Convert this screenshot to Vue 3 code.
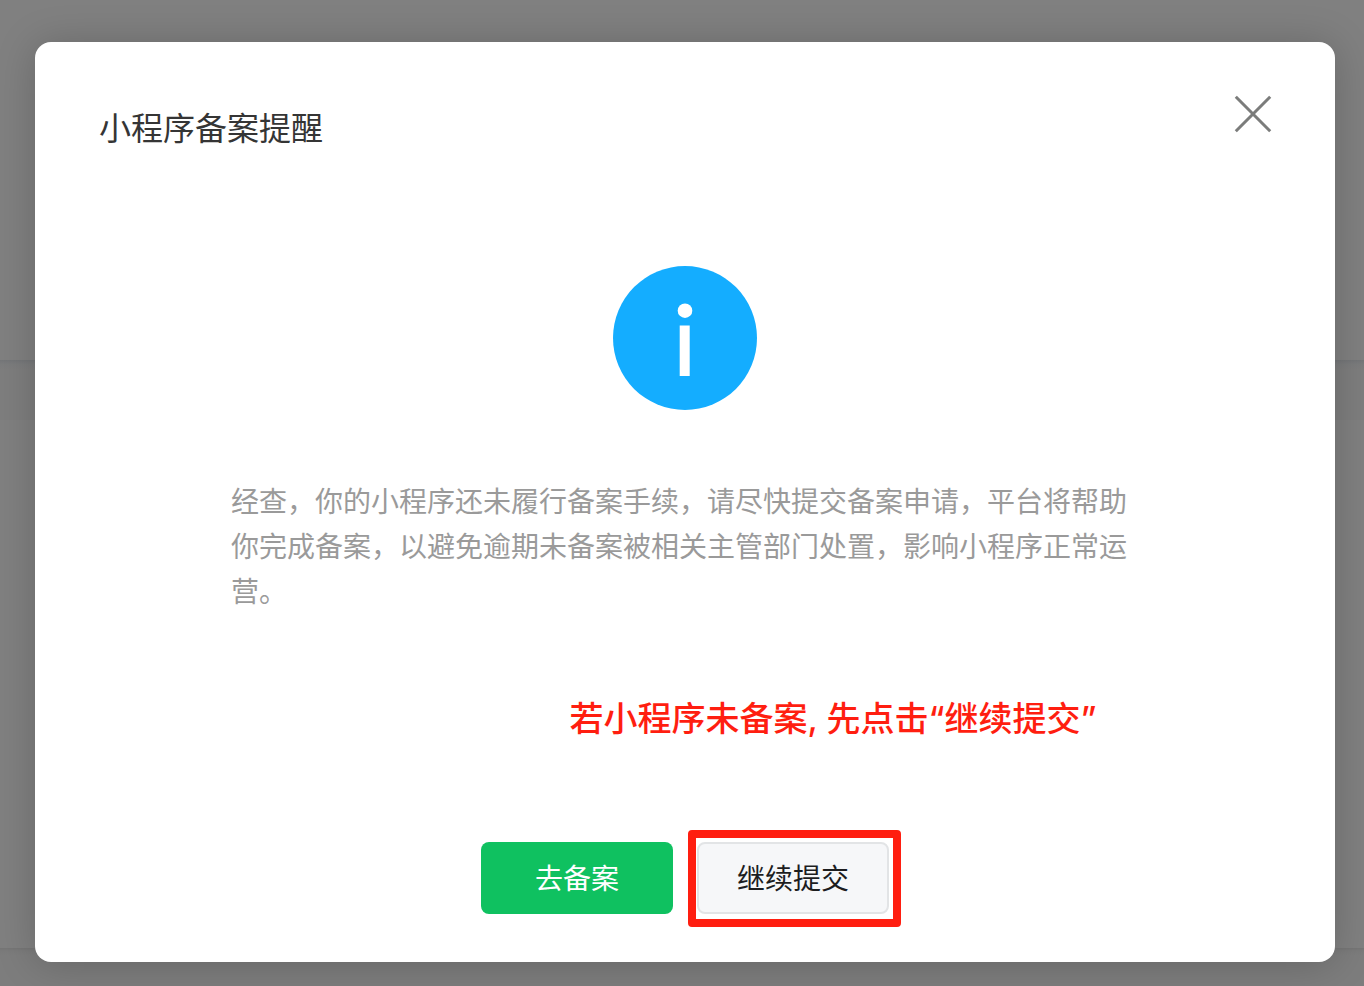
<script setup>
import { ref } from 'vue'

const open = ref(true)
const close = () => {
  open.value = false
}
</script>

<template>
  <div class="stage">
    <div class="backdrop" aria-hidden="true">
      <div class="band band-top"></div>
      <div class="band band-tabs"></div>
      <div class="band band-main"></div>
      <div class="band band-foot"></div>
    </div>

    <section v-if="open" class="dialog" role="dialog" aria-modal="true" aria-labelledby="dialog-title">
      <header class="head">
        <h1 id="dialog-title" class="title">小程序备案提醒</h1>
        <button class="close" type="button" aria-label="关闭" @click="close">
          <svg width="36" height="36" viewBox="0 0 36 36" fill="none" stroke="#7b7c7b" stroke-width="3">
            <path d="M0.8 0.8 35.2 35.2M35.2 0.8 0.8 35.2" />
          </svg>
        </button>
      </header>

      <svg class="info" width="144" height="144" viewBox="0 0 144 144" aria-hidden="true">
        <circle cx="72" cy="72" r="72" fill="#14adff" />
        <circle cx="72" cy="44.7" r="7.3" fill="#fff" />
        <rect x="66.7" y="59.5" width="10" height="50.5" fill="#fff" />
      </svg>

      <p class="message">经查，你的小程序还未履行备案手续，请尽快提交备案申请，平台将帮助你完成备案，以避免逾期未备案被相关主管部门处置，影响小程序正常运营。</p>

      <p class="note">若小程序未备案, 先点击“继续提交”</p>

      <footer class="actions">
        <button class="btn primary" type="button">去备案</button>
        <div class="marked">
          <button class="btn plain" type="button" @click="close">继续提交</button>
        </div>
      </footer>
    </section>
  </div>
</template>

<style>
body {
  margin: 0;
  background: #808080;
}
</style>

<style scoped>
.stage {
  position: relative;
  box-sizing: border-box;
  min-height: 100vh;
  padding: 42px 29px 24px 35px;
  font-family: "Liberation Sans", "Noto Sans CJK SC", sans-serif;
}

.backdrop {
  position: absolute;
  inset: 0;
  display: flex;
  flex-direction: column;
  background: #808080;
}

.band-top {
  height: 360px;
}

.band-tabs {
  height: 60px;
  background: linear-gradient(#747678, #7b7c7d 4px, #7e7e7e 10px);
}

.band-main {
  flex: 1;
}

.band-foot {
  height: 38px;
  background: linear-gradient(#757575, #7b7b7b 3px, #7d7d7d 8px);
}

.dialog {
  position: relative;
  display: flex;
  flex-direction: column;
  align-items: center;
  box-sizing: border-box;
  padding: 54px 64px 48px;
  border-radius: 16px;
  background: #fff;
  box-shadow: 0 2px 40px rgba(0, 0, 0, 0.2);
}

.head {
  display: flex;
  justify-content: space-between;
  align-items: flex-start;
  align-self: stretch;
}

.title {
  margin: 0;
  padding-top: 9px;
  color: #353535;
  font-size: 32px;
  line-height: 48px;
  font-weight: 400;
}

.close {
  display: flex;
  padding: 0;
  border: 0;
  background: none;
  cursor: pointer;
}

.close svg {
  overflow: visible;
}

.info {
  display: block;
  margin-top: 113px;
}

.message {
  box-sizing: border-box;
  width: 100%;
  margin: 70px 0 0;
  padding: 0 132px;
  color: #9a9a9a;
  font-size: 28px;
  line-height: 45px;
}

.note {
  margin: 80px 0 0;
  padding-left: 296px;
  color: #ff1e10;
  font-family: Inter, "Noto Sans CJK SC", sans-serif;
  font-size: 34px;
  line-height: 48px;
  font-weight: 500;
}

.actions {
  display: flex;
  gap: 24px;
  margin-top: 99px;
}

.btn {
  box-sizing: border-box;
  width: 192px;
  height: 72px;
  padding: 3px 0 0;
  border: 0;
  border-radius: 8px;
  font-family: inherit;
  font-size: 28px;
  line-height: 40px;
  cursor: pointer;
}

.primary {
  background: #0fc160;
  color: #fff;
}

.plain {
  border: 2px solid #e2e4e6;
  background: #f6f7f9;
  color: #1c1d1f;
}

.marked {
  position: relative;
}

.marked::after {
  content: "";
  position: absolute;
  inset: -12px -12px -13px -9px;
  border: 8px solid #ff1e10;
  border-radius: 4px;
  pointer-events: none;
}
</style>
